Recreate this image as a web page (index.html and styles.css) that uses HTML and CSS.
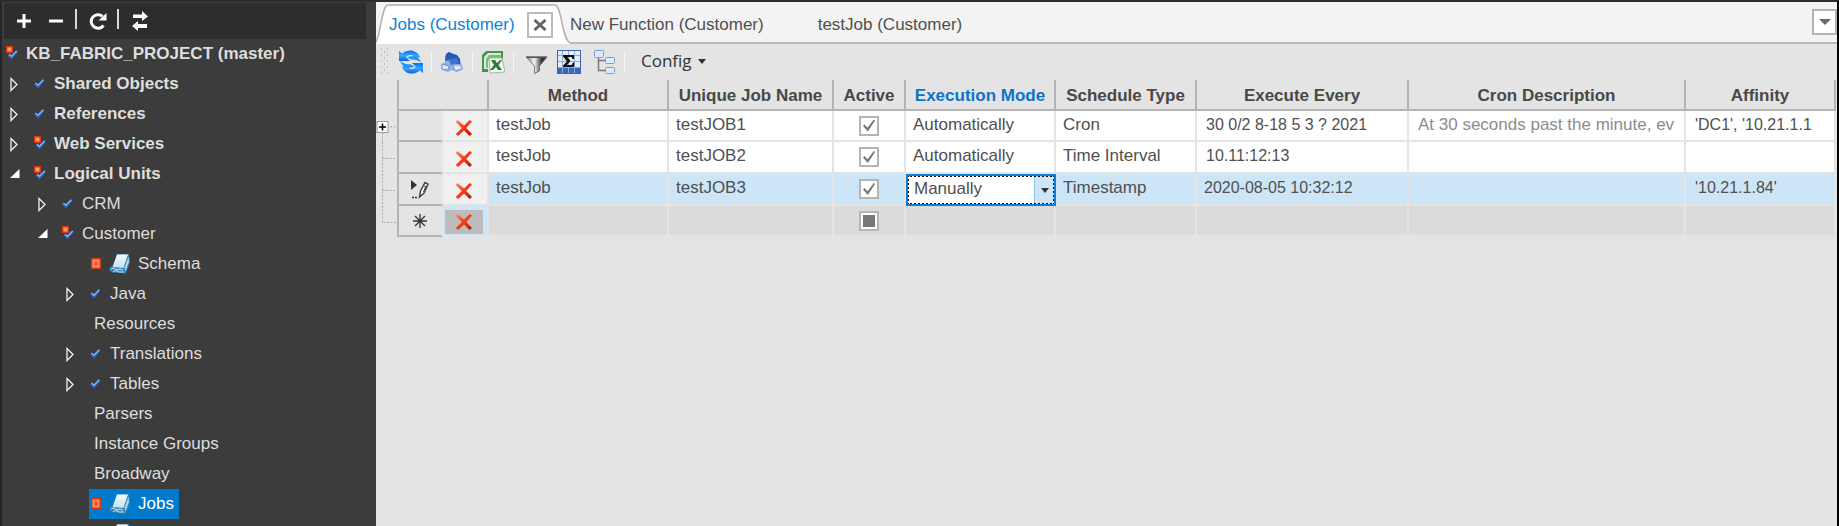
FILE: index.html
```html
<!DOCTYPE html>
<html lang="en">
<head>
<meta charset="utf-8">
<title>Jobs (Customer)</title>
<link rel="stylesheet" href="styles.css">
</head>
<body>
<svg class="defs" aria-hidden="true">
  <defs>
    <linearGradient id="gRed" x1="0" y1="0" x2="1" y2="1"><stop offset="0" stop-color="#ff8a68"/><stop offset=".45" stop-color="#f8401c"/><stop offset="1" stop-color="#b51200"/></linearGradient>
    <linearGradient id="gBlue" x1="0" y1="0" x2="0" y2="1"><stop offset="0" stop-color="#0a6cf0"/><stop offset=".5" stop-color="#35a8ff"/><stop offset="1" stop-color="#0a62e0"/></linearGradient>
    <linearGradient id="gFunnel" x1="0" y1="0" x2="1" y2="0"><stop offset="0" stop-color="#777"/><stop offset=".4" stop-color="#f4f4f4"/><stop offset=".75" stop-color="#333"/><stop offset="1" stop-color="#222"/></linearGradient>
    <linearGradient id="gBook" x1="0" y1="0" x2="0" y2="1"><stop offset="0" stop-color="#f4fcff"/><stop offset="1" stop-color="#bfe2f6"/></linearGradient>
    <symbol id="check" viewBox="0 0 12 16"><path d="M1 7.500 4 10.500 9.500 4" fill="none" stroke="#2f62c8" stroke-width="2.600"/><path d="M1.500 7 4 9.300 9.300 3.800" fill="none" stroke="#7db8fa" stroke-width="1.300"/></symbol>
    <symbol id="changed" viewBox="0 0 12 16"><path d="M2.500 8.500 5.500 11.500 11 5" fill="none" stroke="#2f62c8" stroke-width="2.600"/><path d="M3 8.200 5.500 10.300 10.800 5" fill="none" stroke="#7db8fa" stroke-width="1.300"/><rect x="0" y="0" width="7" height="7" fill="#d83a0c"/><rect x="1.500" y="1.500" width="4" height="4" fill="#ff9a72"/></symbol>
    <symbol id="mark" viewBox="0 0 12 16"><rect x="1" y="2" width="10" height="11" fill="#cf3a10"/><rect x="2.500" y="3.500" width="7" height="8" fill="#ff9470"/><rect x="4" y="5" width="4" height="5" fill="#ff5a28"/></symbol>
    <symbol id="book" viewBox="0 0 22 22"><path d="M8 1H20L21 9 17 20.500 3 19.500 0 17 1 14 4 13Z" fill="#3a7fae"/><path d="M8 1.500H19L14.500 15 3.500 14Z" fill="url(#gBook)"/><path d="M19.500 3.500 20 9 16.500 18.500 15.500 15Z" fill="#a6d6f2"/><path d="M2 16 5 15 8 17 11 16 14 17.500M4 18.500 7 17.500 10 19 15 19" fill="none" stroke="#c9e9fa" stroke-width="1"/></symbol>
    <symbol id="closed" viewBox="0 0 10 16"><path d="M1 2.500 7 8.500 1 14.500Z" fill="none" stroke="#f0f0f0" stroke-width="1.300"/></symbol>
    <symbol id="open" viewBox="0 0 10 16"><path d="M9.500 3V12H0Z" fill="#fff"/></symbol>
    <symbol id="cross" viewBox="0 0 18 18"><path d="M2.500 1 9 6.500 14.500 1 17 2.500 11.200 9 17 15 14.500 17 9 11.500 3 17 .8 15 6.800 9 .8 3Z" fill="url(#gRed)"/></symbol>
    <symbol id="branch" viewBox="0 0 21 32"><path d="M6.500 0V32M6.500 16.500H20" fill="none" stroke="#aaa" stroke-dasharray="2 1.500"/></symbol>
  </defs>
</svg>

<div class="app">
  <aside class="sidebar">
    <div class="side-tools">
      <button class="side-btn" aria-label="Add"><svg width="16" height="16" viewBox="0 0 16 16"><path d="M8 1V15M1 8H15" stroke="#fff" stroke-width="3"/></svg></button>
      <button class="side-btn" aria-label="Remove"><svg width="16" height="16" viewBox="0 0 16 16"><path d="M1 8H15" stroke="#fff" stroke-width="3"/></svg></button>
      <span class="side-sep"></span>
      <button class="side-btn" aria-label="Reload"><svg width="18" height="18" viewBox="0 0 18 18"><path d="M14.500 13.500A6.800 6.800 0 1 1 13.500 4.300" fill="none" stroke="#fff" stroke-width="3"/><path d="M17.500 1V8.500H9.500Z" fill="#fff"/></svg></button>
      <span class="side-sep"></span>
      <button class="side-btn" aria-label="Switch"><svg width="18" height="20" viewBox="0 0 18 20"><path d="M2 3.500H11V0L17 5.500 11 10V7H2ZM16 13H7V10L1 15 7 20V17H16Z" fill="#fff"/></svg></button>
    </div>
    <ul class="tree">
      <li class="node root"><a class="label strong" href="#"><svg class="state"><use href="#changed"/></svg>KB_FABRIC_PROJECT (master)</a></li>
      <li class="node d1"><svg class="twisty"><use href="#closed"/></svg><a class="label strong" href="#"><svg class="state"><use href="#check"/></svg>Shared Objects</a></li>
      <li class="node d1"><svg class="twisty"><use href="#closed"/></svg><a class="label strong" href="#"><svg class="state"><use href="#check"/></svg>References</a></li>
      <li class="node d1"><svg class="twisty"><use href="#closed"/></svg><a class="label strong" href="#"><svg class="state"><use href="#changed"/></svg>Web Services</a></li>
      <li class="node d1"><svg class="twisty"><use href="#open"/></svg><a class="label strong" href="#"><svg class="state"><use href="#changed"/></svg>Logical Units</a></li>
      <li class="node d2"><svg class="twisty"><use href="#closed"/></svg><a class="label" href="#"><svg class="state"><use href="#check"/></svg>CRM</a></li>
      <li class="node d2"><svg class="twisty"><use href="#open"/></svg><a class="label" href="#"><svg class="state"><use href="#changed"/></svg>Customer</a></li>
      <li class="node d3 leaf"><a class="label" href="#"><svg class="state"><use href="#mark"/></svg><svg class="book"><use href="#book"/></svg>Schema</a></li>
      <li class="node d3"><svg class="twisty"><use href="#closed"/></svg><a class="label" href="#"><svg class="state"><use href="#check"/></svg>Java</a></li>
      <li class="node d3 leaf"><a class="label plain" href="#">Resources</a></li>
      <li class="node d3"><svg class="twisty"><use href="#closed"/></svg><a class="label" href="#"><svg class="state"><use href="#check"/></svg>Translations</a></li>
      <li class="node d3"><svg class="twisty"><use href="#closed"/></svg><a class="label" href="#"><svg class="state"><use href="#check"/></svg>Tables</a></li>
      <li class="node d3 leaf"><a class="label plain" href="#">Parsers</a></li>
      <li class="node d3 leaf"><a class="label plain" href="#">Instance Groups</a></li>
      <li class="node d3 leaf"><a class="label plain" href="#">Broadway</a></li>
      <li class="node d3 leaf"><a class="label selected" href="#"><svg class="state"><use href="#mark"/></svg><svg class="book"><use href="#book"/></svg>Jobs</a></li>
      <li class="node d3 leaf"><span class="label"><svg class="state"></svg><svg class="book"><use href="#book"/></svg></span></li>
    </ul>
  </aside>

  <main class="main">
    <nav class="tabs">
      <div class="tab active">
        <svg class="tab-shape" viewBox="0 0 194 42" preserveAspectRatio="none"><path d="M0 42C5 30 7 3 12 3H179C186 4 186 38 194 41V42Z" fill="#fff"/><path d="M0 40C5 30 6 3 12 3H179C186 4 186 38 194 40.500" fill="none" stroke="#b0b0b0" stroke-width="1.500"/></svg>
        <a class="tab-name" href="#">Jobs (Customer)</a>
        <button class="tab-close" aria-label="Close tab"><svg width="14" height="12" viewBox="0 0 14 12"><path d="M1.500 1 12.500 11M12.500 1 1.500 11" stroke="#666" stroke-width="3"/></svg></button>
      </div>
      <a class="tab idle" href="#">New Function (Customer)</a>
      <a class="tab idle" href="#">testJob (Customer)</a>
      <button class="tab-menu" aria-label="Open tabs"><svg width="12" height="6" viewBox="0 0 12 6"><path d="M0 0H12L6 6Z" fill="#6a6a6a"/></svg></button>
    </nav>

    <div class="toolbar">
      <svg class="grip" width="10" height="30" viewBox="0 0 10 30"><g fill="#bebebe"><path d="M1 1h1v2h-1zM1 7h1v2h-1zM1 13h1v2h-1zM1 19h1v2h-1zM1 25h1v2h-1zM7 1h1v2h-1zM7 7h1v2h-1zM7 13h1v2h-1zM7 19h1v2h-1zM7 25h1v2h-1zM4 4h1v2h-1zM4 10h1v2h-1zM4 16h1v2h-1zM4 22h1v2h-1z"/></g></svg>
      <button class="tool" aria-label="Refresh"><svg width="24" height="24" viewBox="0 0 24 24"><path d="M0 1 3 3.500C9-1.500 18-.5 21 7L17 8.500C14 4.500 10 4 7 7L11 11H0Z" fill="url(#gBlue)"/><path d="M24 23 21 20.500C15 25.500 6 24.500 3 17L7 15C10 19.500 14 20 17 17L13 13H24Z" fill="url(#gBlue)"/><path d="M1 10C3 14 8 14 12 14.500L16 17 9 18C5 17 2 15 1 10ZM22 13C20 10 16 10 12 9.500L8 7 14 6C19 7 21 9 22 13Z" fill="#2493fa"/></svg></button>
      <span class="tool-sep"></span>
      <button class="tool" aria-label="Find"><svg width="24" height="24" viewBox="0 0 24 24"><path d="M5 6 9 2 17 5 20 9 23 19 17 22 12 20 8 22 2 20 1 15 5 12Z" fill="#8fb0dd"/><path d="M6 4 9 2 13 4 17 5 20 9 20 14 13 14 9 10 5 11Z" fill="#2459b6"/><path d="M8 9 17 8 19 13 11 15Z" fill="#3f74cb"/><path d="M2 14 9 16 8 20 2 19ZM13 15 21 15 22 19 15 21Z" fill="#dce9fa" stroke="#6f96d2"/></svg></button>
      <span class="tool-sep"></span>
      <button class="tool" aria-label="Export to Excel"><svg width="24" height="24" viewBox="0 0 24 24"><path d="M5 1H22V9H20V3H7L3 7V19H7V22H1V5Z" fill="#3b9b43"/><path d="M8 5H20V8H10L7 11V18H5V9Z" fill="#6fc06f"/><path d="M8 8H21L24 22 9 23Z" fill="#f5f9f3" stroke="#a5b5a3"/><path d="M10 10H14L16 13 19 10H21L17.500 15 21 20H17L15 17 12 20H9L13 15Z" fill="#2f7d34"/></svg></button>
      <span class="tool-sep"></span>
      <button class="tool" aria-label="Filter"><svg width="26" height="24" viewBox="0 0 26 24"><path d="M4 7H25L17.500 16V21L12.500 23.500V16Z" fill="url(#gFunnel)" stroke="#666" stroke-width=".8"/><path d="M4 6.500H25V8H5Z" fill="#555"/></svg></button>
      <button class="tool" aria-label="Totals"><svg width="26" height="24" viewBox="0 0 26 24"><rect x="1.500" y=".5" width="23" height="23" fill="#e4eefb" stroke="#3f66ae"/><path d="M2 18H24V23H2Z" fill="#3768bd"/><path d="M2 5.500H24M2 11.500H24M2 17.500H24M6.500 1V23M12.500 1V23M18.500 1V23" stroke="#8fabd8"/><path d="M7 5H18V9H16.500L15.500 7H11.500L14.500 11 11 15H15.500L17 12.500H18.500L18 17H7V15.500L11 11.500 7 6.500Z" fill="#111"/></svg></button>
      <button class="tool" aria-label="Hierarchy"><svg width="26" height="24" viewBox="0 0 26 24"><path d="M8.500 7V20.500H16M8.500 10.500H16" fill="none" stroke="#77777f" stroke-width="1.500"/><g fill="#dceafa" stroke="#7d9fce"><rect x="4.500" y=".5" width="9" height="7" rx="1"/><rect x="15.500" y="7.500" width="9" height="6" rx="1"/><rect x="15.500" y="17.500" width="9" height="6" rx="1"/></g></svg></button>
      <span class="tool-sep"></span>
      <button class="config">Config<svg width="8" height="5" viewBox="0 0 8 5"><path d="M0 0H8L4 5Z" fill="#333"/></svg></button>
    </div>

    <table class="grid">
      <colgroup><col class="c-gutter"><col class="c-row"><col class="c-del"><col class="c-method"><col class="c-name"><col class="c-active"><col class="c-mode"><col class="c-type"><col class="c-every"><col class="c-cron"><col class="c-aff"></colgroup>
      <thead>
        <tr><td class="gutter"></td><th class="first"></th><th></th><th>Method</th><th>Unique Job Name</th><th>Active</th><th class="current">Execution Mode</th><th>Schedule Type</th><th>Execute Every</th><th>Cron Description</th><th>Affinity</th></tr>
      </thead>
      <tbody>
        <tr>
          <td class="gutter"><svg width="21" height="31" viewBox="0 0 21 31"><path d="M6.500 22V31M14 16H21" stroke="#aaa" stroke-dasharray="2 1.500"/><rect x="1" y="10.500" width="11" height="11" fill="#fff" stroke="#999"/><path d="M3 16H10M6.500 12.500V19.500" stroke="#000" stroke-width="1.500"/></svg></td>
          <td class="rowhead"></td><td class="del"><button aria-label="Delete row"><svg width="18" height="18"><use href="#cross"/></svg></button></td>
          <td>testJob</td><td>testJOB1</td><td class="tick"><input type="checkbox" aria-label="Active" checked></td><td>Automatically</td><td>Cron</td><td class="inset">30 0/2 8-18 5 3 ? 2021</td><td class="inset cron">At 30 seconds past the minute, ev</td><td class="inset">'DC1', '10.21.1.1</td>
        </tr>
        <tr>
          <td class="gutter"><svg width="21" height="32"><use href="#branch"/></svg></td>
          <td class="rowhead"></td><td class="del"><button aria-label="Delete row"><svg width="18" height="18"><use href="#cross"/></svg></button></td>
          <td>testJob</td><td>testJOB2</td><td class="tick"><input type="checkbox" aria-label="Active" checked></td><td>Automatically</td><td>Time Interval</td><td class="inset">10.11:12:13</td><td></td><td></td>
        </tr>
        <tr class="editing">
          <td class="gutter"><svg width="21" height="32"><use href="#branch"/></svg></td>
          <td class="rowhead"><svg width="18" height="20" viewBox="0 0 18 20"><path d="M0 1 6 6 0 11Z" fill="#333"/><path d="M1 18.500H3M4 18.500H6" stroke="#333" stroke-width="1.500"/><path d="M8.500 18 9.500 12 14 3.500 17 5 13 14Z" fill="#fff" stroke="#444" stroke-width="1.500"/><path d="M12.500 6.500 15.500 8M12.500 13 14.500 8" stroke="#444"/></svg></td>
          <td class="del"><button aria-label="Delete row"><svg width="18" height="18"><use href="#cross"/></svg></button></td>
          <td>testJob</td><td>testJOB3</td><td class="tick"><input type="checkbox" aria-label="Active" checked></td>
          <td class="pick"><div class="pick-box"><select aria-label="Execution Mode"><option>Manually</option><option>Automatically</option></select><span class="pick-arrow"><svg width="8" height="5" viewBox="0 0 8 5"><path d="M0 0H8L4 5Z" fill="#333"/></svg></span></div></td>
          <td>Timestamp</td><td class="stamp">2020-08-05 10:32:12</td><td></td><td class="inset">'10.21.1.84'</td>
        </tr>
        <tr class="fresh">
          <td class="gutter"><svg width="21" height="31" viewBox="0 0 21 31"><path d="M6.500 0V16.500H20" fill="none" stroke="#aaa" stroke-dasharray="2 1.500"/></svg></td>
          <td class="rowhead"><svg width="14" height="14" viewBox="0 0 14 14"><path d="M7 0V14M0 7H14M2 2 12 12M12 2 2 12" stroke="#333" stroke-width="1.300"/></svg></td>
          <td class="del"><button aria-label="Delete row"><svg width="18" height="18"><use href="#cross"/></svg></button></td>
          <td></td><td></td><td class="tick"><input type="checkbox" class="mixed" aria-label="Active"></td><td></td><td></td><td></td><td></td><td></td>
        </tr>
      </tbody>
    </table>
  </main>
</div>
</body>
</html>
```
FILE: styles.css
```css
* { box-sizing: border-box; }
body {
  margin: 0;
  background: #e4e4e4;
  color: #505050;
  font: 17px/20px "Liberation Sans", Arial, sans-serif;
}
.defs { position: absolute; width: 0; height: 0; }
button {
  margin: 0;
  padding: 0;
  border: 0;
  background: none;
  color: inherit;
  font: inherit;
  display: flex;
  align-items: center;
  justify-content: center;
}
a { color: inherit; text-decoration: none; }

.app {
  display: flex;
  height: 100vh;
  overflow: hidden;
  border-top: 2px solid #2d2d2f;
  border-right: 2px solid #000;
}

/* Project tree */
.sidebar {
  flex: 0 0 376px;
  overflow: hidden;
  background: #3c3c3c;
  border-left: 2px solid #262626;
  color: #dedede;
}
.side-tools {
  display: flex;
  align-items: center;
  height: 36px;
  margin: 1px 10px 0 2px;
  padding-left: 11px;
  background: #2d2d30;
}
.side-btn { width: 18px; height: 20px; }
.side-btn + .side-btn { margin-left: 14px; }
.side-sep {
  width: 2px;
  height: 20px;
  margin: 0 12px 4px 10px;
  background: #d8d8d8;
}
.tree { margin: 0; padding: 0; list-style: none; }
.node { display: flex; align-items: center; height: 30px; }
.root { padding-left: 3px; }
.d1 { padding-left: 8px; }
.d2 { padding-left: 36px; }
.d3 { padding-left: 64px; }
.leaf { padding-left: 87px; }
.twisty { flex: none; width: 10px; height: 16px; margin-right: 13px; }
.label {
  display: flex;
  align-items: center;
  height: 30px;
  padding: 0 5px 0 1px;
  white-space: nowrap;
}
.plain { padding-left: 5px; }
.strong { font-weight: bold; }
.selected { background: #007acc; color: #fff; }
.state { flex: none; width: 12px; height: 16px; margin-right: 8px; }
.book { flex: none; width: 22px; height: 22px; margin: 0 7px 0 -1px; }

/* Document area */
.main { flex: 1; min-width: 0; }
.tabs {
  display: flex;
  align-items: center;
  height: 42px;
  background: #f3f3f3;
  border-bottom: 2px solid #b8b8b8;
}
.tab { margin-right: 54px; white-space: nowrap; }
.idle { padding-top: 6px; }
.active {
  position: relative;
  display: flex;
  flex: 0 0 194px;
  align-items: center;
  justify-content: space-between;
  height: 42px;
  margin: 0 0 -2px 0;
  padding: 4px 17px 0 13px;
}
.tab-shape { position: absolute; left: 0; top: 0; width: 100%; height: 100%; }
.tab-name { position: relative; color: #0e82d8; }
.tab-close {
  position: relative;
  width: 26px;
  height: 26px;
  background: #fff;
  border: 2px solid #bababa;
}
.tab-menu {
  width: 25px;
  height: 26px;
  margin-left: auto;
  background: #fff;
  border: 2px solid #b4b4b4;
}
.toolbar {
  display: flex;
  align-items: center;
  gap: 8px;
  height: 36px;
  padding-left: 4px;
}
.grip { margin-right: 1px; }
.tool-sep { width: 1px; height: 20px; background: #f6f6f6; }
.config {
  gap: 6px;
  padding: 0 0 2px 8px;
  color: #333;
  font: 17px/24px "Open Sans", "Noto Sans", sans-serif;
}

/* Jobs grid */
.grid {
  width: calc(100% - 1px);
  table-layout: fixed;
  border-collapse: separate;
  border-spacing: 0;
}
.c-gutter { width: 21px; }
.c-row { width: 46px; }
.c-del { width: 46px; }
.c-method { width: 180px; }
.c-name { width: 165px; }
.c-active { width: 72px; }
.c-mode { width: 150px; }
.c-type { width: 141px; }
.c-every { width: 212px; }
.c-cron { width: 277px; }
.c-aff { width: 150px; }
.grid th {
  height: 31px;
  padding: 2px 0 0;
  border-right: 2px solid #b4b4b4;
  border-bottom: 2px solid #b4b4b4;
  color: #484848;
  white-space: nowrap;
}
.grid th.first { border-left: 2px solid #b4b4b4; border-right: 0; }
.grid th.current { color: #0b74c8; }
.grid tbody td {
  height: 31px;
  padding: 0 0 2px 7px;
  background: #fff;
  border-right: 2px solid #e4e4e4;
  border-bottom: 2px solid #e4e4e4;
  overflow: hidden;
  white-space: nowrap;
}
.grid tbody tr:nth-child(2) td, .grid tbody tr:nth-child(3) td { height: 32px; }
.grid tbody td.gutter { padding: 0; background: none; border: 0; line-height: 0; }
.grid tbody td.rowhead {
  padding: 0;
  background: #e4e4e4;
  border-left: 2px solid #b4b4b4;
  border-bottom: 2px solid #b4b4b4;
  line-height: 0;
  text-align: center;
}
.grid tbody td.del { padding: 4px 0 0 2px; background: #f0f0f0; line-height: 0; }
.del button { width: 38px; height: 24px; }
.grid tbody td.inset { padding-left: 9px; font-size: 16px; }
.grid tbody td.stamp { font-size: 16px; }
.grid tbody td.cron { color: #8c8c8c; font-size: 17px; }
.grid tbody td.tick { padding: 0; line-height: 0; text-align: center; }
.grid .editing td { background: #cce5f7; }
.grid .fresh td { background: #dbdbdb; }
.grid .fresh td.del { background: #cce5f7; padding: 2px 0 0 2px; }
.fresh .del button { background: #bcbcbc; }

.tick input {
  appearance: none;
  display: inline-block;
  width: 20px;
  height: 20px;
  margin: 0;
  background: #fff;
  border: 2px solid #b4b4b4;
}
.tick input::after {
  content: "";
  display: block;
  width: 12px;
  height: 12px;
  margin: 2px;
  background: #777;
  clip-path: polygon(0 55%, 12% 42%, 38% 68%, 90% 0, 100% 8%, 40% 100%);
}
.tick input.mixed::after { clip-path: none; }

.grid tbody td.pick { padding: 0; border: 2px solid #0b7fd8; }
.pick-box {
  display: flex;
  height: 28px;
  background: #fff;
  outline: 2px dotted #111;
  outline-offset: -1px;
}
.pick select {
  appearance: none;
  flex: 1;
  min-width: 0;
  padding: 0 0 2px 6px;
  border: 0;
  background: none;
  color: inherit;
  font: inherit;
}
.pick-arrow {
  display: flex;
  align-items: center;
  justify-content: center;
  width: 20px;
  background: #cce5f7;
  border-left: 1px solid #8cc4ec;
}
```
